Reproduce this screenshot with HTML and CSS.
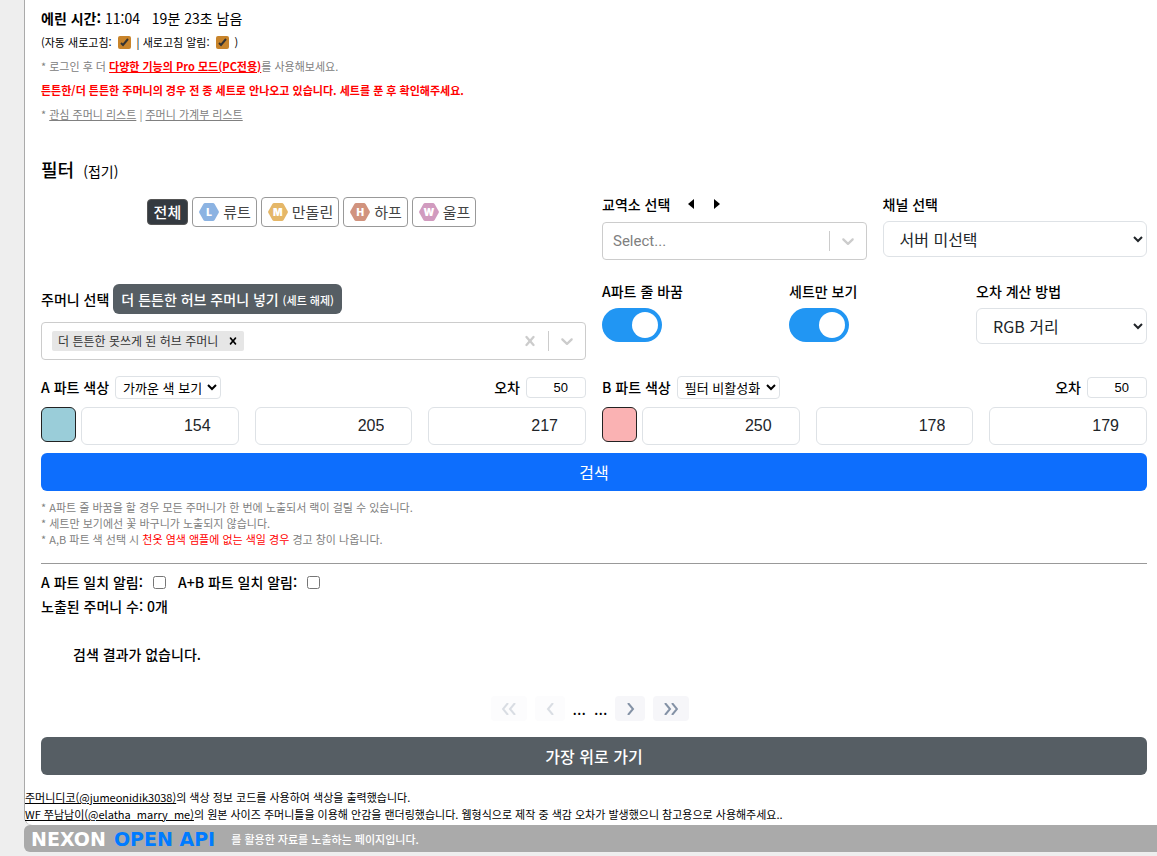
FILE: index.html
```
<!DOCTYPE html>
<html lang="ko">

<head>
	<meta charset="utf-8">
	<meta name="viewport" content="width=device-width, initial-scale=1">
	<title>주머니 검색</title>
	<link rel="stylesheet" href="styles.css">
</head>

<body>
	<svg xmlns="http://www.w3.org/2000/svg" class="sprite">
		<symbol id="icon-hex" viewBox="0 0 20 18">
			<path d="M6 0h8q1 0 1.600 1l4 7q.5 1 0 2l-4 7q-.6 1-1.600 1H6q-1 0-1.600-1l-4-7q-.5-1 0-2l4-7Q5 0 6 0z" />
		</symbol>
		<symbol id="icon-down" viewBox="0 0 20 20">
			<path d="M4.516 7.548c.436-.446 1.043-.481 1.576 0L10 11.295l3.908-3.747c.533-.481 1.141-.446 1.574 0 .436.445.408 1.197 0 1.615l-4.695 4.502a1.095 1.095 0 0 1-1.576 0L4.516 9.163c-.409-.418-.436-1.170 0-1.615z" />
		</symbol>
		<symbol id="icon-close" viewBox="0 0 20 20">
			<path d="M14.348 14.849a1.200 1.200 0 0 1-1.697 0L10 11.819l-2.651 3.029a1.200 1.200 0 1 1-1.697-1.697l2.758-3.150-2.759-3.152a1.200 1.200 0 1 1 1.697-1.697L10 8.183l2.651-3.031a1.200 1.200 0 1 1 1.697 1.697l-2.758 3.152 2.758 3.150a1.200 1.200 0 0 1 0 1.698z" />
		</symbol>
	</svg>

	<main class="page">
		<div class="content">
			<section class="status">
				<p class="time"><b>에린 시간:</b> 11:04 <span class="remain">19분 23초 남음</span></p>
				<p class="refresh">
					<label for="auto">(자동 새로고침:</label> <input type="checkbox" id="auto" class="check-dark" checked>
					<label for="alarm">| 새로고침 알림:</label> <input type="checkbox" id="alarm" class="check-dark" checked> )
				</p>
				<p class="info">* 로그인 후 더 <a href="#pro" class="pro">다양한 기능의 Pro 모드(PC전용)</a>를 사용해보세요.</p>
				<p class="info warn">튼튼한/더 튼튼한 주머니의 경우 전 종 세트로 안나오고 있습니다. 세트를 푼 후 확인해주세요.</p>
				<p class="info">* <a href="#list">관심 주머니 리스트</a> | <a href="#book">주머니 가계부 리스트</a></p>
			</section>

			<h2 class="filter-title">필터 <button type="button" class="fold">(접기)</button></h2>

			<form class="filter">
				<div class="servers">
					<button type="button" class="server all">전체</button>
					<button type="button" class="server"><span class="badge lute"><svg><use href="#icon-hex" /></svg><b>L</b></span>류트</button>
					<button type="button" class="server"><span class="badge mandolin"><svg><use href="#icon-hex" /></svg><b>M</b></span>만돌린</button>
					<button type="button" class="server"><span class="badge harp"><svg><use href="#icon-hex" /></svg><b>H</b></span>하프</button>
					<button type="button" class="server"><span class="badge wolf"><svg><use href="#icon-hex" /></svg><b>W</b></span>울프</button>
				</div>

				<div class="trade">
					<div class="field">
						<div class="field-head">
							<label for="shop">교역소 선택</label>
							<button type="button" class="arrow" aria-label="이전"><svg viewBox="0 0 6 10"><path d="M6 0v10L0 5z" /></svg></button>
							<button type="button" class="arrow" aria-label="다음"><svg viewBox="0 0 6 10"><path d="M0 0v10l6-5z" /></svg></button>
						</div>
						<div class="combo">
							<input type="text" id="shop" placeholder="Select...">
							<span class="bar"></span>
							<svg class="ico"><use href="#icon-down" /></svg>
						</div>
					</div>
					<div class="field">
						<div class="field-head"><label for="channel">채널 선택</label></div>
						<select id="channel" class="form-select">
							<option>서버 미선택</option>
						</select>
					</div>
				</div>

				<div class="pouch">
					<div class="pouch-head">
						<label for="pouch">주머니 선택</label>
						<button type="button" class="btn-dark">더 튼튼한 허브 주머니 넣기 <small>(세트 해제)</small></button>
					</div>
					<div class="combo">
						<span class="tag">더 튼튼한 못쓰게 된 허브 주머니 <button type="button" aria-label="삭제"><svg><use href="#icon-close" /></svg></button></span>
						<input type="text" id="pouch">
						<button type="button" class="clear" aria-label="모두 삭제"><svg class="ico"><use href="#icon-close" /></svg></button>
						<span class="bar"></span>
						<svg class="ico"><use href="#icon-down" /></svg>
					</div>
				</div>

				<div class="options">
					<div class="option">
						<label for="wrap">A파트 줄 바꿈</label>
						<input type="checkbox" id="wrap" class="switch" checked>
					</div>
					<div class="option">
						<label for="set">세트만 보기</label>
						<input type="checkbox" id="set" class="switch" checked>
					</div>
					<div class="option">
						<label for="calc">오차 계산 방법</label>
						<select id="calc" class="form-select">
							<option>RGB 거리</option>
						</select>
					</div>
				</div>

				<div class="color">
					<div class="color-head">
						<label for="mode-a">A 파트 색상</label>
						<select id="mode-a" class="small-select">
							<option>가까운 색 보기</option>
						</select>
						<label for="gap-a" class="gap-label">오차</label>
						<input type="text" id="gap-a" class="gap-input" value="50">
					</div>
					<div class="rgb">
						<button type="button" class="swatch swatch-a" aria-label="A 파트 색상"></button>
						<input type="text" value="154" aria-label="A 빨강">
						<input type="text" value="205" aria-label="A 초록">
						<input type="text" value="217" aria-label="A 파랑">
					</div>
				</div>
				<div class="color">
					<div class="color-head">
						<label for="mode-b">B 파트 색상</label>
						<select id="mode-b" class="small-select">
							<option>필터 비활성화</option>
						</select>
						<label for="gap-b" class="gap-label">오차</label>
						<input type="text" id="gap-b" class="gap-input" value="50">
					</div>
					<div class="rgb">
						<button type="button" class="swatch swatch-b" aria-label="B 파트 색상"></button>
						<input type="text" value="250" aria-label="B 빨강">
						<input type="text" value="178" aria-label="B 초록">
						<input type="text" value="179" aria-label="B 파랑">
					</div>
				</div>

				<button type="submit" class="btn-search">검색</button>
			</form>

			<div class="notes">
				<p>* A파트 줄 바꿈을 할 경우 모든 주머니가 한 번에 노출되서 랙이 걸릴 수 있습니다.</p>
				<p>* 세트만 보기에선 꽃 바구니가 노출되지 않습니다.</p>
				<p>* A,B 파트 색 선택 시 <span class="red">천옷 염색 앰플에 없는 색일 경우</span> 경고 창이 나옵니다.</p>
			</div>

			<hr>

			<div class="alerts">
				<label for="match-a">A 파트 일치 알림:</label>
				<input type="checkbox" id="match-a">
				<label for="match-ab">A+B 파트 일치 알림:</label>
				<input type="checkbox" id="match-ab">
			</div>
			<p class="count">노출된 주머니 수: 0개</p>
			<p class="empty">검색 결과가 없습니다.</p>

			<nav class="pager">
				<button type="button" class="wide" disabled aria-label="처음"><svg viewBox="0 0 14 12"><path d="M6 0L1 6l5 6M13 0L8 6l5 6" /></svg></button>
				<button type="button" disabled aria-label="이전"><svg viewBox="0 0 14 12"><path d="M10 0L5 6l5 6" /></svg></button>
				<span>...</span>
				<span>...</span>
				<button type="button" aria-label="다음"><svg viewBox="0 0 14 12"><path d="M5 0l5 6-5 6" /></svg></button>
				<button type="button" class="wide" aria-label="마지막"><svg viewBox="0 0 14 12"><path d="M1 0l5 6-5 6M8 0l5 6-5 6" /></svg></button>
			</nav>

			<button type="button" class="btn-dark btn-top">가장 위로 가기</button>
		</div>

		<div class="credits">
			<p><a href="#jumeonidik">주머니디코(@jumeonidik3038)</a>의 색상 정보 코드를 사용하여 색상을 출력했습니다.</p>
			<p><a href="#elatha">WF 쭈남남이(@elatha_marry_me)</a>의 원본 사이즈 주머니틀을 이용해 안감을 랜더링했습니다. 웹형식으로 제작 중 색감 오차가 발생했으니 참고용으로 사용해주세요..</p>
		</div>
	</main>

	<footer class="footer">
		<span class="logo">NEXON <em>OPEN API</em></span>
		<span>를 활용한 자료를 노출하는 페이지입니다.</span>
	</footer>
</body>

</html>
```
FILE: styles.css
```
* {
	box-sizing: border-box;
}

body {
	margin: 0;
	padding-left: 24px;
	background-color: #eee;
	color: #000;
	font-family: "Noto Sans CJK KR", sans-serif;
	font-size: 14px;
	line-height: 24px;
}

p,
h2 {
	margin: 0;
}

button,
input,
select {
	margin: 0;
	font-family: inherit;
}

button {
	padding: 0;
	border: 0;
	background: none;
	color: inherit;
}

.filter label {
	font-weight: 500;
}

.sprite {
	display: none;
}

.page {
	background-color: #fff;
	border-left: 1px solid #aaa;
	border-bottom-left-radius: 8px;
}

.content {
	padding: 6px 10px 0 16px;
}

.remain {
	margin-left: 8px;
}

.refresh {
	display: flex;
	align-items: center;
	gap: 6px;
	font-size: 11px;
}

.check-dark {
	appearance: none;
	width: 13px;
	height: 13px;
	border-radius: 2px;
	background: #c8842b url("data:image/svg+xml,%3Csvg xmlns='http://www.w3.org/2000/svg' viewBox='0 0 13 13'%3E%3Cpath d='M3 7l2 2 5-6' fill='none' stroke='%23333' stroke-width='2'/%3E%3C/svg%3E");
}

.info {
	color: #808080;
	font-size: 11px;
}

.info a {
	color: inherit;
}

.info .pro,
.warn {
	color: red;
	font-weight: bold;
}

.filter-title {
	margin-top: 28px;
	font-size: 18px;
	font-weight: 500;
	line-height: 30px;
}

.fold {
	margin-left: 4px;
	font-size: 14px;
}

.filter {
	display: grid;
	grid-template-columns: repeat(2, minmax(0, 1fr));
	column-gap: 16px;
	margin-top: 8px;
}

.servers {
	display: flex;
	justify-content: center;
	align-items: flex-start;
	gap: 4px;
	padding-top: 5px;
	padding-right: 4px;
}

.server {
	display: flex;
	align-items: center;
	gap: 4px;
	height: 30px;
	padding: 0 5px 0 6px;
	border: 1px solid #999;
	border-radius: 4px;
	color: #444;
	font-size: 15px;
	line-height: 24px;
}

.server.all {
	height: 26px;
	margin-top: 2px;
	padding: 0 6px;
	background-color: #343a40;
	border-color: #555;
	color: #fff;
	font-weight: 500;
}

.badge {
	display: grid;
	place-items: center;
	color: #fff;
	font-family: Inter, sans-serif;
	font-size: 10px;
	line-height: 18px;
}

.badge > * {
	grid-area: 1 / 1;
}

.badge b {
	font-weight: 900;
}

.badge svg {
	width: 20px;
	height: 18px;
}

.lute svg {
	fill: #8cb3e2;
}

.mandolin svg {
	fill: #e5b768;
}

.harp svg {
	fill: #d1937e;
}

.wolf svg {
	fill: #d19bbf;
}

.trade {
	display: grid;
	grid-template-columns: repeat(2, minmax(0, 1fr));
	gap: 16px;
}

.field-head {
	display: flex;
	align-items: center;
	height: 24px;
	margin-bottom: 5px;
}

.field-head .arrow {
	display: flex;
	margin-left: 18px;
}

.field-head .arrow + .arrow {
	margin-left: 20px;
}

.arrow svg {
	width: 6px;
	height: 10px;
}

.combo {
	display: flex;
	align-items: center;
	height: 38px;
	margin-top: 6px;
	padding: 0 8px 0 10px;
	border: 1px solid #ccc;
	border-radius: 4px;
}

.combo input {
	flex: 1;
	min-width: 0;
	padding: 0;
	border: 0;
	outline: 0;
	background: none;
	font-family: Roboto, "Noto Sans CJK KR", sans-serif;
	font-size: 15px;
}

.combo input::placeholder {
	color: #808080;
}

.bar {
	width: 1px;
	height: 20px;
	margin-right: 8px;
	background-color: #ccc;
}

.ico {
	width: 20px;
	height: 20px;
	fill: #ccc;
}

.clear {
	display: flex;
	margin-right: 8px;
}

.tag {
	display: flex;
	align-items: center;
	gap: 8px;
	height: 20px;
	padding: 0 4px 0 6px;
	border-radius: 2px;
	background-color: #e6e6e6;
	color: #333;
	font-size: 12px;
}

.tag button {
	display: flex;
}

.tag svg {
	width: 14px;
	height: 14px;
	fill: #000;
}

.form-select {
	width: 100%;
	height: 36px;
	padding: 0 0 0 12px;
	border: 1px solid #dee2e6;
	border-radius: 6px;
	background-color: #fff;
	color: #212529;
	font-size: 16px;
}

.pouch {
	margin-top: 24px;
}

.pouch-head {
	display: flex;
	align-items: center;
	gap: 4px;
	margin-bottom: 8px;
}

.btn-dark {
	height: 30px;
	padding: 0 8px;
	border-radius: 6px;
	background-color: #565e64;
	color: #fff;
	font-size: 14px;
	font-weight: 500;
	line-height: 24px;
}

.btn-dark small {
	font-size: 11px;
}

.options {
	display: grid;
	grid-template-columns: repeat(3, minmax(0, 1fr));
	gap: 16px;
	margin-top: 19px;
}

.option label {
	display: block;
	margin-bottom: 5px;
}

.switch {
	appearance: none;
	display: block;
	width: 60px;
	height: 34px;
	padding: 4px;
	border-radius: 17px;
	background-color: #2196f3;
}

.switch::before {
	content: "";
	display: block;
	width: 26px;
	height: 26px;
	margin-left: 26px;
	border-radius: 50%;
	background-color: #fff;
}

.color {
	margin-top: 14px;
}

.color-head {
	display: flex;
	align-items: center;
	gap: 6px;
	height: 26px;
}

.small-select {
	height: 23px;
	padding: 0 3px;
	border: 1px solid #dee2e6;
	border-radius: 4px;
	background-color: #fff;
	font-size: 13px;
}

.gap-label {
	margin-left: auto;
}

.gap-input {
	width: 60px;
	height: 21px;
	padding: 0 17px 0 0;
	border: 1px solid #dee2e6;
	border-radius: 4px;
	font-family: "Liberation Sans", sans-serif;
	font-size: 13px;
	text-align: right;
}

.rgb {
	display: flex;
	gap: 16px;
	margin-top: 7px;
}

.swatch {
	width: 35px;
	height: 35px;
	margin-right: -11px;
	border: 1px solid #222;
	border-radius: 6px;
}

.swatch-a {
	background-color: #9acdd9;
}

.swatch-b {
	background-color: #fab2b3;
}

.rgb input {
	flex: 1;
	min-width: 0;
	height: 38px;
	padding: 0 27px 0 12px;
	border: 1px solid #dee2e6;
	border-radius: 6px;
	color: #212529;
	font-family: "Liberation Sans", sans-serif;
	font-size: 16px;
	text-align: right;
}

.btn-search {
	grid-column: 1 / -1;
	height: 38px;
	margin-top: 8px;
	border-radius: 6px;
	background-color: #0d6efd;
	color: #fff;
	font-size: 16px;
}

.notes {
	margin-top: 8px;
	color: #808080;
	font-size: 11px;
	line-height: 16px;
}

.red {
	color: red;
}

hr {
	margin: 16px 0 6px;
	border: 0;
	border-top: 1px solid #999;
}

.alerts {
	display: flex;
	align-items: center;
}

.alerts input {
	width: 13px;
	height: 13px;
	margin: 0 12px 0 10px;
}

.alerts label,
.count,
.empty {
	font-weight: 500;
}

.empty {
	padding: 24px 32px;
}

.pager {
	display: flex;
	justify-content: center;
	gap: 8px;
	margin-top: 6px;
	padding-right: 8px;
	font-size: 16px;
}

.pager button {
	display: flex;
	justify-content: center;
	align-items: center;
	width: 30px;
	height: 25px;
	border-radius: 4px;
	background-color: #f6f6f9;
}

.pager .wide {
	width: 36px;
}

.pager button:disabled {
	opacity: 0.3;
}

.pager svg {
	width: 14px;
	height: 12px;
	fill: none;
	stroke: #8492a6;
	stroke-width: 2;
}

.btn-top {
	width: 100%;
	height: 38px;
	margin-top: 16px;
	font-size: 16px;
}

.credits {
	padding: 14px 0 2px;
	font-size: 11px;
	line-height: 17px;
}

.credits a {
	color: inherit;
}

.footer {
	display: flex;
	align-items: center;
	gap: 16px;
	height: 27px;
	margin-bottom: 4px;
	padding-left: 7px;
	border-radius: 6px 0 0 6px;
	background-color: #aaa;
	color: #fff;
	font-size: 11px;
	font-weight: 500;
}

.logo {
	display: flex;
	gap: 8px;
	font-family: "DejaVu Sans", sans-serif;
	font-size: 19px;
	font-weight: bold;
}

.logo em {
	color: #007bff;
	font-style: normal;
}
```
